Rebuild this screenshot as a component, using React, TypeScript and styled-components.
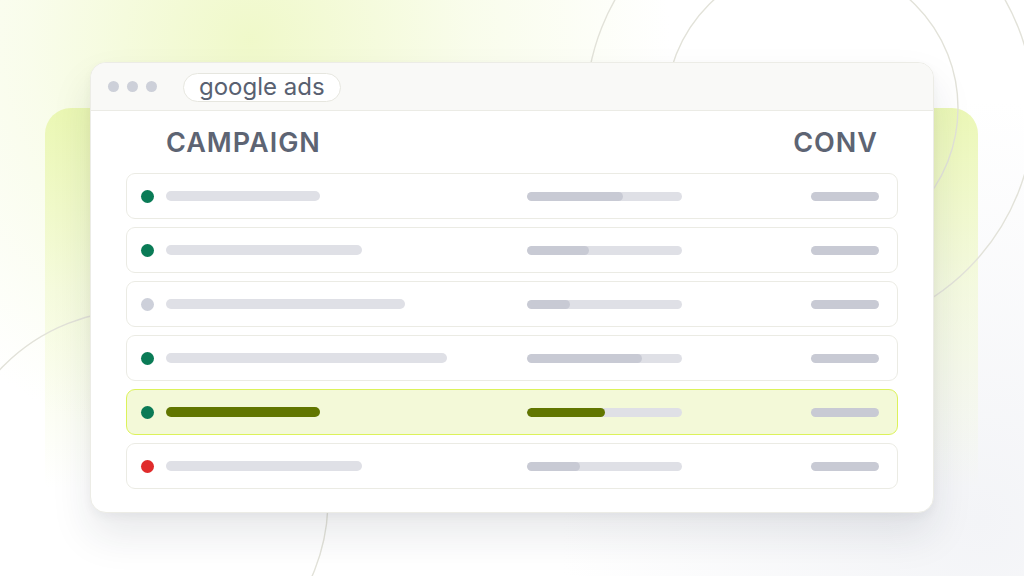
import React from 'react';
import styled, { createGlobalStyle } from 'styled-components';

const GlobalStyle = createGlobalStyle`
  html, body {
    margin: 0;
    padding: 0;
    background: #ffffff;
  }
  body {
    font-family: Inter, "Noto Sans", "Liberation Sans", sans-serif;
  }
`;

type Status = 'live' | 'paused' | 'error';

interface Campaign {
  id: number;
  status: Status;
  name: number;
  progress: number;
  highlight?: boolean;
}

const campaigns: Campaign[] = [
  { id: 1, status: 'live', name: 154, progress: 62 },
  { id: 2, status: 'live', name: 196, progress: 40 },
  { id: 3, status: 'paused', name: 239, progress: 28 },
  { id: 4, status: 'live', name: 281, progress: 74 },
  { id: 5, status: 'live', name: 154, progress: 50, highlight: true },
  { id: 6, status: 'error', name: 196, progress: 34 },
];

const dotColors: Record<Status, string> = {
  live: '#0a7b56',
  paused: '#cdd0da',
  error: '#e02b2b',
};

const Canvas = styled.div`
  position: relative;
  width: 1024px;
  height: 576px;
  overflow: hidden;
  background:
    radial-gradient(circle at 250px 40px, rgba(238, 248, 196, 0.9) 0, rgba(245, 251, 222, 0.6) 220px, rgba(255, 255, 255, 0) 420px),
    radial-gradient(circle at 980px 520px, #f3f4f7 0, rgba(255, 255, 255, 0) 420px),
    #ffffff;
  padding: 62px 0 0 90px;
  box-sizing: border-box;
`;

const LimePanel = styled.div`
  position: absolute;
  left: 45px;
  top: 108px;
  width: 933px;
  height: 400px;
  border-radius: 26px;
  background: linear-gradient(180deg, rgba(232, 246, 170, 0.85) 0%, rgba(238, 248, 196, 0.5) 45%, rgba(255, 255, 255, 0) 95%);
`;

const Rings = styled.svg`
  position: absolute;
  inset: 0;
  width: 1024px;
  height: 576px;
`;

const Window = styled.div`
  position: relative;
  width: 844px;
  height: 451px;
  box-sizing: border-box;
  border: 1px solid #ecece6;
  border-radius: 16px;
  background: #ffffff;
  overflow: hidden;
  box-shadow: 0 22px 40px rgba(30, 35, 60, 0.1), 0 4px 10px rgba(30, 35, 60, 0.04);
`;

const TitleBar = styled.div`
  display: flex;
  align-items: center;
  height: 47px;
  padding-left: 17px;
  background: #f9f9f7;
  border-bottom: 1.5px solid #ebebe5;
`;

const Dots = styled.div`
  display: flex;
  gap: 8px;
  margin-right: 26px;
`;

const WinDot = styled.span`
  width: 11px;
  height: 11px;
  border-radius: 50%;
  background: #cdd0d9;
`;

const UrlPill = styled.div`
  display: flex;
  align-items: center;
  height: 29px;
  box-sizing: border-box;
  padding: 0 15px;
  border: 1.5px solid #e6e6df;
  border-radius: 15px;
  background: #ffffff;
  color: #596171;
  font-size: 24px;
  line-height: 1;
  margin-top: 1px;
`;

const Body = styled.div`
  padding: 18px 35px 0 35px;
`;

const HeaderRow = styled.div`
  display: flex;
  justify-content: space-between;
  padding: 0 20px 0 40px;
  height: 27px;
  margin-bottom: 17px;
`;

const HeaderLabel = styled.span`
  color: #5d6473;
  font-size: 27px;
  font-weight: 600;
  line-height: 27px;
  letter-spacing: 1px;
`;

const List = styled.div`
  display: flex;
  flex-direction: column;
  gap: 8px;
`;

const Row = styled.div<{ $highlight?: boolean }>`
  display: grid;
  grid-template-columns: 25px 361px 155px 1fr 68px;
  align-items: center;
  height: 46px;
  box-sizing: border-box;
  padding: 0 18px 0 14px;
  border: 1.5px solid ${p => (p.$highlight ? '#dcf25a' : '#ebebe4')};
  border-radius: 9px;
  background: ${p => (p.$highlight ? '#f3f9d8' : '#ffffff')};
`;

const StatusDot = styled.span<{ $color: string }>`
  width: 13px;
  height: 13px;
  border-radius: 50%;
  background: ${p => p.$color};
`;

const NameBar = styled.span<{ $highlight?: boolean }>`
  display: block;
  height: 10px;
  border-radius: 5px;
  background: ${p => (p.$highlight ? '#617600' : '#dfe0e6')};
`;

const Track = styled.div`
  height: 9px;
  border-radius: 5px;
  background: #dfe0e6;
  overflow: hidden;
`;

const Fill = styled.div<{ $highlight?: boolean }>`
  height: 100%;
  border-radius: 5px;
  background: ${p => (p.$highlight ? '#617600' : '#c8cad4')};
`;

const ConvBar = styled.span`
  grid-column: 5;
  display: block;
  height: 9px;
  border-radius: 5px;
  background: #c8cad4;
`;

export default function App() {
  return (
    <>
      <GlobalStyle />
      <Canvas>
        <LimePanel />
        <Rings viewBox="0 0 1024 576">
          <g fill="none" stroke="#e2e2d9" strokeWidth="1.4">
            <circle cx="812" cy="108" r="146" />
            <circle cx="810" cy="110" r="224" />
            <circle cx="138" cy="500" r="190" />
          </g>
        </Rings>
        <Window>
          <TitleBar>
            <Dots>
              <WinDot />
              <WinDot />
              <WinDot />
            </Dots>
            <UrlPill>google ads</UrlPill>
          </TitleBar>
          <Body>
            <HeaderRow>
              <HeaderLabel>CAMPAIGN</HeaderLabel>
              <HeaderLabel>CONV</HeaderLabel>
            </HeaderRow>
            <List>
              {campaigns.map(c => (
                <Row key={c.id} $highlight={c.highlight}>
                  <StatusDot $color={dotColors[c.status]} />
                  <div>
                    <NameBar $highlight={c.highlight} style={{ width: c.name }} />
                  </div>
                  <Track>
                    <Fill $highlight={c.highlight} style={{ width: `${c.progress}%` }} />
                  </Track>
                  <ConvBar />
                </Row>
              ))}
            </List>
          </Body>
        </Window>
      </Canvas>
    </>
  );
}
